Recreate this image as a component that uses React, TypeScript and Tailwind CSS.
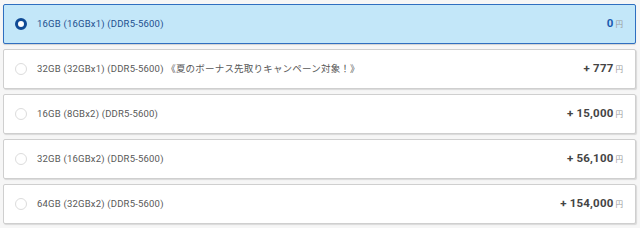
import React, { useState } from "react";

const OPTIONS = [
  { id: "16x1", label: "16GB (16GBx1) (DDR5-5600)", price: "0" },
  {
    id: "32x1",
    label: "32GB (32GBx1) (DDR5-5600) 《夏のボーナス先取りキャンペーン対象！》",
    price: "+ 777",
  },
  { id: "8x2", label: "16GB (8GBx2) (DDR5-5600)", price: "+ 15,000" },
  { id: "16x2", label: "32GB (16GBx2) (DDR5-5600)", price: "+ 56,100" },
  { id: "32x2", label: "64GB (32GBx2) (DDR5-5600)", price: "+ 154,000" },
];

export default function App() {
  const [selected, setSelected] = useState("16x1");

  return (
    <div
      className="min-h-screen w-[640px] bg-[#f6f6f6] pt-[4px] pl-[3px] pr-[4px]"
      style={{ fontFamily: 'Roboto, "Noto Sans CJK JP", sans-serif' }}
    >
      <div className="flex flex-col gap-[5px]">
        {OPTIONS.map((o) => {
          const on = o.id === selected;
          return (
            <button
              key={o.id}
              type="button"
              onClick={() => setSelected(o.id)}
              className={`flex h-[40px] w-full items-center rounded-[2px] border pl-[11px] pr-[12px] text-left ${
                on
                  ? "border-[#2f6fc0] bg-[#c3e7f9] shadow-[0_1px_1px_rgba(0,0,0,0.15)]"
                  : "border-[#cfcfcf] bg-white shadow-[1px_1px_1px_rgba(0,0,0,0.12)]"
              }`}
            >
              <span
                className={`h-[12px] w-[12px] shrink-0 rounded-full ${
                  on
                    ? "border-[3px] border-[#0f4a95] bg-white"
                    : "border border-[#dcdcdc] bg-white"
                }`}
              />
              <span
                className={`ml-[10px] flex-1 text-[9.5px] tracking-[0.2px] ${
                  on ? "text-[#1d4f8f]" : "text-[#585858]"
                }`}
              >
                {o.label}
              </span>
              <span className="flex items-baseline">
                <span
                  className={`text-[11.5px] font-bold tracking-[0.2px] ${
                    on ? "text-[#1a5bb0]" : "text-[#444444]"
                  }`}
                >
                  {o.price}
                </span>
                <span className="ml-[2px] text-[7.5px] text-[#999999]">円</span>
              </span>
            </button>
          );
        })}
      </div>
    </div>
  );
}
